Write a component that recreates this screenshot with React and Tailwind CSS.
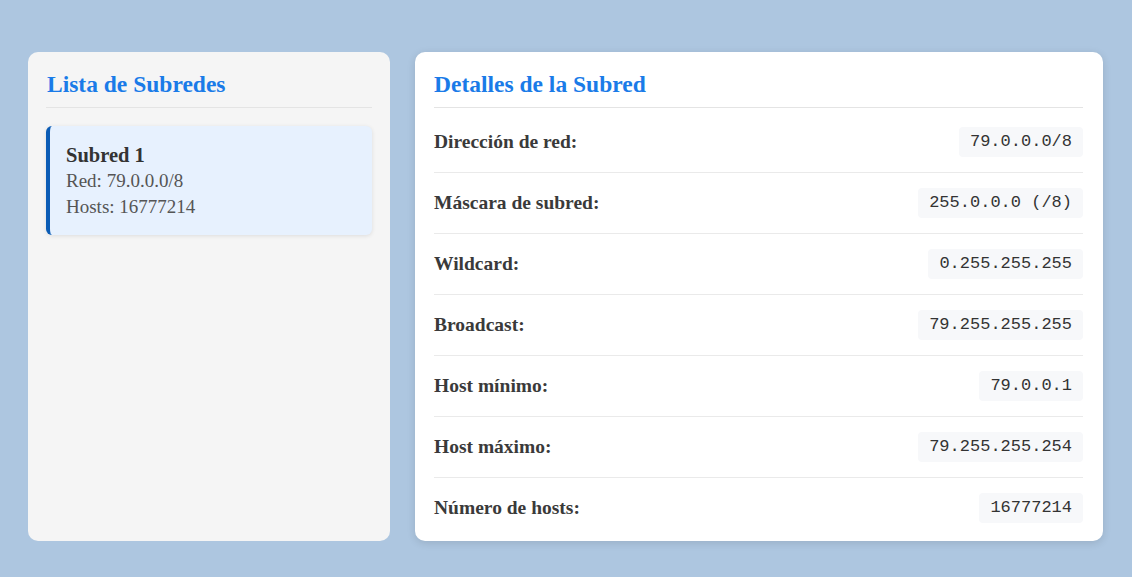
import React from "react";

const rows = [
  ["Dirección de red:", "79.0.0.0/8"],
  ["Máscara de subred:", "255.0.0.0 (/8)"],
  ["Wildcard:", "0.255.255.255"],
  ["Broadcast:", "79.255.255.255"],
  ["Host mínimo:", "79.0.0.1"],
  ["Host máximo:", "79.255.255.254"],
  ["Número de hosts:", "16777214"],
];

export default function App() {
  return (
    <div className="min-h-[577px] bg-[#adc6e0] pl-[28px] pr-[29px] pt-[52px] pb-[36px] font-['Liberation_Serif',serif]">
      <div className="flex gap-[25px] h-[489px]">
        <div className="w-[362px] shrink-0 bg-[#f5f5f5] rounded-[10px] px-[18px] pt-[20px]">
          <h2 className="text-[23.5px] leading-[25px] font-bold text-[#1a7be8] pb-[10px] border-b border-[#e4e4e4] pl-px">
            Lista de Subredes
          </h2>
          <div className="mt-[18px] bg-[#e7f1fe] border-l-4 border-[#0b5cb5] rounded-[6px] shadow-[0_1px_4px_rgba(0,0,0,0.1)] pl-[16px] pr-4 pt-[16px] pb-[15px] text-[#333]">
            <div className="text-[20.5px] font-bold leading-[26px]">Subred 1</div>
            <div className="text-[19px] leading-[26px] text-[#555]">Red: 79.0.0.0/8</div>
            <div className="text-[19px] leading-[26px] text-[#555]">Hosts: 16777214</div>
          </div>
        </div>
        <div className="flex-1 bg-white rounded-[10px] pl-[19px] pr-[20px] pt-[20px] shadow-[0_2px_8px_rgba(0,0,0,0.12)]">
          <h2 className="text-[23.5px] leading-[25px] font-bold text-[#1a7be8] pb-[10px] border-b border-[#e4e4e4]">
            Detalles de la Subred
          </h2>
          <div className="mt-[4px]">
            {rows.map(([label, value], i) => (
              <div
                key={label}
                className={`flex items-center justify-between py-[15px] ${i < rows.length - 1 ? "border-b border-[#eaeaea]" : ""}`}
              >
                <span className="text-[19.5px] font-bold text-[#3a3a3a]">{label}</span>
                <span className="h-[30px] flex items-center px-[11px] rounded-[4px] bg-[#f7f8fa] font-['Liberation_Mono',monospace] text-[17px] text-[#333]">
                  {value}
                </span>
              </div>
            ))}
          </div>
        </div>
      </div>
    </div>
  );
}
